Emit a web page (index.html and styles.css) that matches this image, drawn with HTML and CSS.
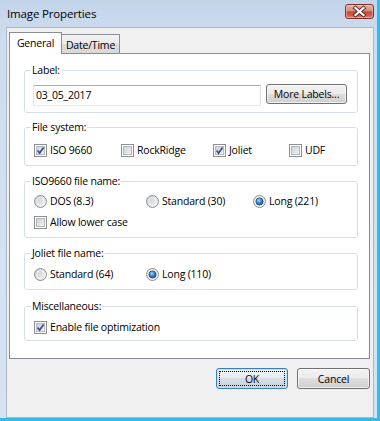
FILE: index.html
```html
<!DOCTYPE html>
<html>
<head>
<meta charset="utf-8">
<title>Image Properties</title>
<link rel="stylesheet" href="styles.css">
</head>
<body>
<svg class="defs" aria-hidden="true">
  <defs>
    <linearGradient id="cbg" x1="0" y1="0" x2="1" y2="1">
      <stop offset="0" stop-color="#c9ced4"/>
      <stop offset="1" stop-color="#f6f6f6"/>
    </linearGradient>
    <linearGradient id="cbon" x1="0" y1="0" x2="1" y2="1">
      <stop offset="0" stop-color="#c7cfdc"/>
      <stop offset="1" stop-color="#f2f4f8"/>
    </linearGradient>
    <linearGradient id="rbg" x1="0" y1="0" x2="1" y2="1">
      <stop offset="0" stop-color="#c4c8cd"/>
      <stop offset="1" stop-color="#f7f7f7"/>
    </linearGradient>
    <radialGradient id="rdot" cx="0.4" cy="0.35" r="0.7">
      <stop offset="0" stop-color="#a6dcff"/>
      <stop offset="0.5" stop-color="#3b8ad0"/>
      <stop offset="1" stop-color="#164f86"/>
    </radialGradient>
  </defs>
</svg>
<div class="window">
  <div class="titlebar">
    <span class="title">Image Properties</span>
    <span class="close">
      <svg width="29" height="15" viewBox="0 0 29 15">
        <path d="M10.5 4 L18.5 11 M18.5 4 L10.5 11" fill="none" stroke="#5b2620" stroke-width="4" stroke-linecap="square"/>
        <path d="M10.5 4 L18.5 11 M18.5 4 L10.5 11" fill="none" stroke="#ffffff" stroke-width="2.2" stroke-linecap="square"/>
      </svg>
    </span>
  </div>
  <div class="client">
    <div class="tabs">
      <div class="tab active">General</div>
      <div class="tab">Date/Time</div>
    </div>
    <div class="panel">
      <fieldset class="group g-label">
        <legend>Label:</legend>
        <div class="label-row">
          <div class="textbox">03_05_2017</div>
          <div class="btn more">More Labels...</div>
        </div>
      </fieldset>

      <fieldset class="group g-fs">
        <legend>File system:</legend>
        <div class="opts cols-fs">
          <span class="opt"><svg class="box" viewBox="0 0 13 13"><rect x=".5" y=".5" width="12" height="12" fill="#fff" stroke="#8e8f8f"/><rect x="2.5" y="2.5" width="8" height="8" fill="url(#cbon)" stroke="#b4bac3"/><path d="M3.6 6.4 L5.6 9 L9.6 3.6" fill="none" stroke="#3a4f8a" stroke-width="1.7"/></svg>ISO 9660</span>
          <span class="opt"><svg class="box" viewBox="0 0 13 13"><rect x=".5" y=".5" width="12" height="12" fill="#fff" stroke="#8e8f8f"/><rect x="2.5" y="2.5" width="8" height="8" fill="url(#cbg)" stroke="#b1b6bd"/></svg>RockRidge</span>
          <span class="opt"><svg class="box" viewBox="0 0 13 13"><rect x=".5" y=".5" width="12" height="12" fill="#fff" stroke="#8e8f8f"/><rect x="2.5" y="2.5" width="8" height="8" fill="url(#cbon)" stroke="#b4bac3"/><path d="M3.6 6.4 L5.6 9 L9.6 3.6" fill="none" stroke="#3a4f8a" stroke-width="1.7"/></svg>Joliet</span>
          <span class="opt"><svg class="box" viewBox="0 0 13 13"><rect x=".5" y=".5" width="12" height="12" fill="#fff" stroke="#8e8f8f"/><rect x="2.5" y="2.5" width="8" height="8" fill="url(#cbg)" stroke="#b1b6bd"/></svg>UDF</span>
        </div>
      </fieldset>

      <fieldset class="group g-iso">
        <legend>ISO9660 file name:</legend>
        <div class="opts cols-iso">
          <span class="opt"><svg class="box" viewBox="0 0 13 13"><circle cx="6.5" cy="6.5" r="6" fill="url(#rbg)" stroke="#8e8f8f"/><circle cx="6.5" cy="6.5" r="4" fill="none" stroke="#ffffff" stroke-opacity=".6"/></svg>DOS (8.3)</span>
          <span class="opt"><svg class="box" viewBox="0 0 13 13"><circle cx="6.5" cy="6.5" r="6" fill="url(#rbg)" stroke="#8e8f8f"/><circle cx="6.5" cy="6.5" r="4" fill="none" stroke="#ffffff" stroke-opacity=".6"/></svg>Standard (30)</span>
          <span class="opt"><svg class="box" viewBox="0 0 13 13"><circle cx="6.5" cy="6.5" r="6" fill="#eef1f4" stroke="#8e8f8f"/><circle cx="6.5" cy="6.5" r="3.6" fill="url(#rdot)" stroke="#1c4a78" stroke-width=".8"/></svg>Long (221)</span>
        </div>
        <div class="opts second">
          <span class="opt"><svg class="box" viewBox="0 0 13 13"><rect x=".5" y=".5" width="12" height="12" fill="#fff" stroke="#8e8f8f"/><rect x="2.5" y="2.5" width="8" height="8" fill="url(#cbg)" stroke="#b1b6bd"/></svg>Allow lower case</span>
        </div>
      </fieldset>

      <fieldset class="group g-joliet">
        <legend>Joliet file name:</legend>
        <div class="opts cols-iso">
          <span class="opt"><svg class="box" viewBox="0 0 13 13"><circle cx="6.5" cy="6.5" r="6" fill="url(#rbg)" stroke="#8e8f8f"/><circle cx="6.5" cy="6.5" r="4" fill="none" stroke="#ffffff" stroke-opacity=".6"/></svg>Standard (64)</span>
          <span class="opt"><svg class="box" viewBox="0 0 13 13"><circle cx="6.5" cy="6.5" r="6" fill="#eef1f4" stroke="#8e8f8f"/><circle cx="6.5" cy="6.5" r="3.6" fill="url(#rdot)" stroke="#1c4a78" stroke-width=".8"/></svg>Long (110)</span>
        </div>
      </fieldset>

      <fieldset class="group g-misc">
        <legend>Miscellaneous:</legend>
        <div class="opts">
          <span class="opt"><svg class="box" viewBox="0 0 13 13"><rect x=".5" y=".5" width="12" height="12" fill="#fff" stroke="#8e8f8f"/><rect x="2.5" y="2.5" width="8" height="8" fill="url(#cbon)" stroke="#b4bac3"/><path d="M3.6 6.4 L5.6 9 L9.6 3.6" fill="none" stroke="#3a4f8a" stroke-width="1.7"/></svg>Enable file optimization</span>
        </div>
      </fieldset>
    </div>
    <div class="buttons">
      <div class="btn default ok"><span class="focus">OK</span></div>
      <div class="btn cancel">Cancel</div>
    </div>
  </div>
</div>
</body>
</html>
```

FILE: styles.css
```css
* {
  box-sizing: border-box;
}

body {
  margin: 0;
  font-family: "Open Sans", "Noto Sans", sans-serif;
  font-size: 10.5px;
  letter-spacing: -0.2px;
  color: #000;
}

.defs {
  display: block;
  width: 0;
  height: 0;
}

.window {
  width: 380px;
  height: 421px;
  display: flex;
  flex-direction: column;
  background: linear-gradient(#c2d4ea, #d0ddee 40px, #d7e3f1);
  border-right: 3px solid #3bb8e4;
  border-bottom: 3px solid #3bb8e4;
}

.titlebar {
  flex: none;
  height: 27px;
  display: flex;
  align-items: flex-start;
  justify-content: space-between;
  padding-left: 7px;
}

.title {
  font-size: 11.5px;
  letter-spacing: -0.15px;
  line-height: 28px;
}

.close {
  display: block;
  width: 29px;
  height: 15px;
  margin-top: 4px;
  margin-right: 3px;
  border: 1px solid #7d3229;
  border-radius: 3px;
  background: linear-gradient(#eab1a3, #d98a79 45%, #c44a38 52%, #cf5d49 80%, #dd8a74);
  box-shadow: inset 0 0 0 1px rgba(255, 220, 210, 0.45);
}

.close svg {
  display: block;
  margin: -1px;
}

.client {
  flex: 1;
  margin: 0 3px 0 6px;
  border: 1px solid #a9b8ca;
  background: #f0f0f0;
  padding: 4px 3px 0 2px;
}

.tabs {
  display: flex;
  align-items: flex-end;
}

.tab {
  border: 1px solid #898c95;
  border-bottom: none;
  display: flex;
  align-items: center;
  justify-content: center;
}

.tab.active {
  position: relative;
  z-index: 1;
  width: 53px;
  height: 22px;
  margin-bottom: -1px;
  background: #fff;
  padding-bottom: 1px;
}

.tab + .tab {
  margin-left: -1px;
  width: 59px;
  height: 19px;
  background: linear-gradient(#f3f3f3, #ebebeb 50%, #dedede 51%, #d8d8d8);
  padding-top: 1px;
}

.panel {
  border: 1px solid #898c95;
  background: #fff;
  padding: 9px 11px 17px 14px;
}

.group {
  margin: 0;
  min-width: 0;
  border: 1px solid #d5dfe5;
  border-radius: 3px;
  padding: 0 8px;
}

.group legend {
  padding: 0 1px;
  margin-left: -2px;
  line-height: 14px;
}

.g-label {
  padding-top: 8px;
  padding-bottom: 6px;
}

.g-fs {
  margin-top: 7px;
  padding-top: 8px;
  padding-bottom: 7px;
}

.g-iso {
  margin-top: 8px;
  padding-top: 5px;
  padding-bottom: 7px;
}

.g-joliet {
  margin-top: 8px;
  padding-top: 6px;
  padding-bottom: 7px;
}

.g-misc {
  margin-top: 9px;
  padding-top: 6px;
  padding-bottom: 5px;
}

.label-row {
  display: flex;
  align-items: flex-start;
  gap: 5px;
}

.textbox {
  width: 228px;
  height: 21px;
  border: 1px solid #abadb3;
  border-color: #abadb3 #dbdfe6 #e3e9ef #e2e3ea;
  background: #fff;
  padding-left: 2px;
  line-height: 19px;
}

.btn {
  display: flex;
  align-items: center;
  justify-content: center;
  border: 1px solid #707070;
  border-radius: 3px;
  background: linear-gradient(#f2f2f2, #ebebeb 49%, #dddddd 50%, #cfcfcf);
  box-shadow: inset 0 0 0 1px rgba(255, 255, 255, 0.7);
}

.btn.more {
  width: 81px;
  height: 20px;
  margin-top: -1px;
}

.opts {
  display: flex;
  height: 16px;
  align-items: center;
  padding-left: 1px;
}

.opts.second {
  margin-top: 5px;
}

.opt {
  display: flex;
  align-items: center;
  line-height: 16px;
  white-space: nowrap;
}

.box {
  width: 13px;
  height: 13px;
  flex: none;
  margin-right: 3px;
}

.cols-fs {
  display: grid;
  grid-template-columns: 87px 92px 76px auto;
}

.cols-iso {
  display: grid;
  grid-template-columns: 112px 107px auto;
}

.buttons {
  display: flex;
  justify-content: flex-end;
  gap: 9px;
  margin-top: 9px;
}

.buttons .btn {
  height: 21px;
}

.btn.ok {
  width: 72px;
  border-color: #3c7fb1;
  box-shadow: inset 0 0 0 1px #b9e0f7;
  background: linear-gradient(#f0f4f7, #e6ecf0 49%, #d6dee4 50%, #cbd4db);
  padding: 2px;
}

.btn.ok .focus {
  flex: 1;
  align-self: stretch;
  display: flex;
  align-items: center;
  justify-content: center;
  border: 1px dotted #000;
}

.btn.cancel {
  width: 73px;
}
```
